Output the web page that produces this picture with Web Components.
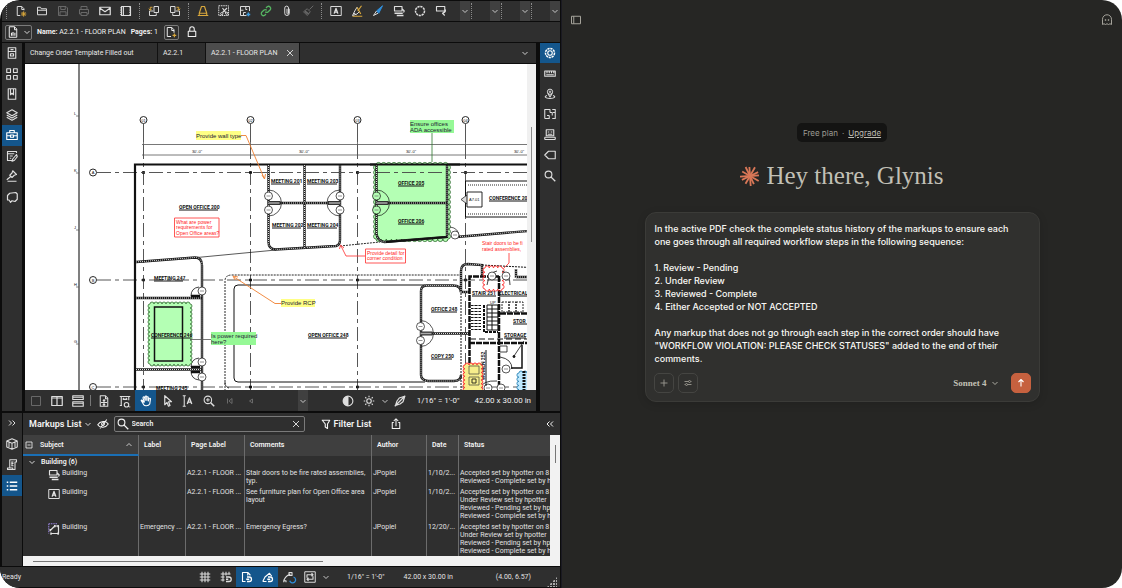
<!DOCTYPE html>
<html lang="en">
<head>
<meta charset="utf-8">
<meta name="viewport" content="width=device-width, initial-scale=1">
<title>Markup review workspace</title>
<style>
html, body { margin: 0; height: 100%; background: #fff; }
body { font-family: Roboto, "Liberation Sans", sans-serif; }
</style>
</head>
<body>
<work-space></work-space>
<script>
/* ---------- icons: 16 x 16 grid, stroked with the current colour ---------- */
const ICONS = {
  newdoc: '<path d="M7 14H3V2h6l3 3v2M9 2v4h3"/><path stroke="#d9a83c" d="M11.500 8.500v7M8 12h7M9 9.500l5 5M14 9.500l-5 5"/>',
  folder: '<path d="M2 13V3h4l1 2h7v8zM2 7h12"/>',
  save: '<path d="M2 2h10l2 2v10H2zM5 2v4h6V2M4 14V9h8v5"/>',
  print: '<path d="M4 6V2h8v4M4 12H2V6h12v6h-2M4 10h8v4H4z"/>',
  mail: '<path stroke-width="1.600" d="M1 3h14v10H1zM1 4l7 5 7-5"/>',
  panel: '<path stroke-width="1.500" d="M2 2h12v12H2zM4.500 2v12"/><path stroke-width="1.300" stroke-dasharray="1.500 1.500" d="M1 3v11M13 3v10"/>',
  rotl: '<path d="M8 2h6v8H8z"/><path d="M7 8H2v6h9v-3"/><path stroke="#d9a83c" d="M6 3H3v4M1 5l2 2 2-2"/>',
  rotr: '<path d="M8 2H2v8h6z"/><path d="M9 8h5v6H5v-3"/><path stroke="#d9a83c" d="M10 3h3v4M11 5l2 2 2-2"/>',
  stamp: '<path stroke="#d9a83c" stroke-width="1.500" d="M6 2h4l3 9v3H3v-3zM1 14h14M3 11h10"/>',
  snap: '<path stroke-dasharray="2 1" d="M1 1h13v13H1z"/><path stroke-width="1.500" d="M6 4l5 7M12 4L6 10"/><circle cx="5" cy="11.500" r="1.500"/><circle cx="11.500" cy="11" r="1.500"/>',
  planadd: '<path d="M10 14H2V2h12v6M2 7h4M9 2v4h2M6 14v-4h3"/><path stroke="#3a9be0" stroke-width="2" d="M12.500 10v5M10 12.500h5"/>',
  link: '<path stroke="#55b461" stroke-width="1.700" d="M7 9a3 3 0 0 0 4 0l3-3a3 3 0 0 0-4-4L8 4M9 7a3 3 0 0 0-4 0l-3 3a3 3 0 0 0 4 4l2-2"/>',
  clip: '<path d="M11 5v6a3 3 0 0 1-6 0V4a2 2 0 0 1 5 0v7a1 1 0 0 1-2 0V5"/>',
  brush: '<path d="M15 1l-5 5M7 5l4 4-4 5-5-5zM4 9l3 3"/><path stroke-width="2" d="M4 8l5 4"/>',
  textbox: '<path d="M1 2h14v12H1z"/><path stroke-width="1.800" d="M5.500 11.500L8 4.500l2.500 7M6 9.500h4"/>',
  hilite: '<path stroke="#d9a83c" stroke-width="1.600" d="M8 3l5 9M14 1L9 8M2 15h13"/><path d="M8 3L5 8l-3 6 6-2 3-3M4 11l3 2"/>',
  pen: '<path stroke="#2f8fdc" fill="#2f8fdc" d="M14 1L6 8l3 3z"/><path d="M6 8l-4 6 6-3"/>',
  cloudtext: '<path stroke-width="1.500" d="M2 2h10v6H2zM12 5l3 3-1 2"/><path stroke-width="1.800" d="M2 11h11M5 14h9"/>',
  cloud: '<circle cx="8" cy="8" r="6" stroke-width="2" stroke-dasharray="3 1"/>',
  callout: '<path stroke-width="1.500" d="M2 2h11v6H2zM13 5c2 3 1 5-3 6l3-2M10 11l3 3"/>',
  down: '<path stroke-width="1.700" d="M3 6l5 5 5-5"/>',
  up: '<path stroke-width="1.500" d="M3 10l5-5 5 5"/>',
  docbars: '<path d="M3 1h7l3 3v11H3zM10 1v4h3"/><path stroke-width="1.500" d="M6 13V9M8 13V8M10.500 13V9"/>',
  pageadd: '<path d="M8 14H3V2h6l3 3v4M9 2v4h3"/><path stroke="#d9a83c" stroke-width="1.500" d="M12.500 10v5M10 12.500h5"/>',
  lock: '<path stroke-width="1.400" d="M3 7h10v7H3zM5 7V4a3 3 0 0 1 6 0v3"/>',
  close: '<path stroke-width="1.700" d="M2 2l12 12M14 2L2 14"/>',
  cabinet: '<path stroke-width="1.500" d="M3 1h10v14H3zM3 6h10M6 3.500h4M6 9h4v3H6z"/>',
  grid4: '<path stroke-width="1.500" d="M1 1h5v5H1zM10 1h5v5h-5zM1 10h5v5H1zM10 10h5v5h-5z"/>',
  bookmark: '<path stroke-width="1.500" d="M3 1h10v14H3zM6 1v8l2-2 2 2V1"/>',
  layers: '<path stroke-width="1.500" d="M8 1l7 4-7 4-7-4zM1 8l7 4 7-4M1 11l7 4 7-4"/>',
  toolbox: '<path stroke-width="1.500" d="M1 5h14v9H1zM5 5V2h6v3M1 9h5M10 9h5M6 8h4v3H6z"/>',
  note: '<path stroke-width="1.500" d="M10 14H2V2h12v2M2 5h9M5 8h4M5 11h2M14 6l-5 6-1 3 3-1 4-5z"/>',
  pin: '<path stroke-width="1.500" d="M9 1l5 5-3 1-3 3-3-3 3-3zM6 9l-5 4M2 15h12"/>',
  shape: '<path stroke-width="1.600" d="M5 3l8-1 2 2v7l-3 3-4-1-2 2-2-3H2V6z"/>',
  gear: '<circle cx="8" cy="8" r="6" stroke-width="2" stroke-dasharray="3 1"/><circle cx="8" cy="8" r="3" stroke-width="1.500"/>',
  ruler: '<path stroke-width="1.500" d="M1 4h14v7H1zM4 4v3M7 4v3M10 4v3M13 4v3M3 9h10"/>',
  place: '<circle cx="8" cy="5" r="3.500"/><circle cx="8" cy="5" r="1"/><path stroke-width="1.400" d="M5 7l3 5 3-5M4 10c-4 1-3 4 4 4s8-3 4-4"/>',
  plan: '<path stroke-width="1.400" d="M1 14V2h7v4M11 2h4v12h-4M1 14h6v-4M4 10h3M8 6h3v4M12 6h3"/>',
  book: '<path stroke-width="1.500" d="M3 1h10v8H3zM5 4h2M9 4h2M5 7h6M1 11h14M1 14h14M1 11v3M15 11v3"/>',
  tag: '<path stroke-width="1.500" d="M6 3h9v10H6L1 8z"/>',
  search: '<circle cx="6" cy="6" r="4.500" stroke-width="1.500"/><path stroke-width="1.800" d="M9.500 9.500L15 15"/>',
  square: '<path d="M2 2h12v12H2z"/>',
  cols: '<path stroke-width="1.600" d="M1 2h14v12H1zM8 2v12M1 4h14"/>',
  rows: '<path stroke-width="1.500" d="M1 1h14v5H1zM1 3h14M1 9h14v6H1zM1 11h14"/>',
  fitpage: '<path stroke-width="1.400" d="M3 1h7l3 3v11H3zM10 1v4h3M8 6v8M4 10h8M6.500 8L8 6l1.500 2M6.500 12L8 14l1.500-2"/>',
  fitwidth: '<path stroke-width="1.500" d="M1 2h14M3 2v12M1 14h3M13 2v5M7 13a3 3 0 1 0 6 0 3 3 0 0 0-6 0M5 6h6M5 6l2-2M11 6L9 4M12 15l3 1"/>',
  hand: '<path stroke-width="1.500" d="M5 10L3 7c-1-1-2 0-1 1l3 5c1 2 6 2 8-1l1-7c0-1-2-1-2 0l-1 3V3c0-1-2-1-2 0v4V2c0-1-2-1-2 0v5L6 3C5 2 4 3 4 4l2 6"/>',
  arrow: '<path stroke-width="1.600" d="M5 1v12l3-3 2 5 2-1-2-5h4z"/>',
  textsel: '<path stroke-width="1.400" d="M1 1h4M3 1v14M1 15h4"/><path stroke-width="1.800" d="M7 12l3-8 3 8M8 9.500h4"/>',
  zoomin: '<circle cx="6.500" cy="6.500" r="5" stroke-width="1.400"/><path stroke-width="2" d="M10 10l5 5"/><path d="M6.500 4v5M4 6.500h5"/>',
  first: '<path stroke-width="2" d="M3 3v10M12 3L6 8l6 5z"/>',
  prev: '<path stroke-width="2" d="M11 4L5 8l6 4z"/>',
  contrast: '<circle cx="8" cy="8" r="6.500" stroke-width="1.500"/><path fill="currentColor" d="M8 2v12a6 6 0 0 1 0-12z"/>',
  sun: '<circle cx="8" cy="8" r="3" stroke-width="1.500"/><path stroke-width="1.500" d="M8 1v2M8 13v2M1 8h2M13 8h2M3 3l1.500 1.500M11.500 11.500L13 13M3 13l1.500-1.500M11.500 4.500L13 3"/>',
  nib: '<path stroke-width="1.600" d="M13 2L7 4 4 8l-2 6 6-2 4-3 2-6zM1 15L15 1"/>',
  chevrons: '<path stroke-width="2" d="M2 3l5 5-5 5M9 3l5 5-5 5"/>',
  chevronsl: '<path stroke-width="2" d="M7 3L2 8l5 5M14 3L9 8l5 5"/>',
  cube: '<path stroke-width="1.400" d="M8 1l7 3v8l-7 3-7-3V4zM1 4l7 3 7-3M8 7v8M4 6v6M12 6v6"/>',
  script: '<path stroke-width="1.400" d="M5 12V1h9v3h-2v10H2v-2h7v2M7 4h3M7 6h3M7 9h3M8 4v5"/>',
  list: '<path stroke-width="2" d="M5 3h10M5 8h10M5 13h10M1 3h2M1 8h2M1 13h2"/>',
  eyeoff: '<path stroke-width="1.400" d="M1 9c3-5 11-6 14-1-3 5-11 6-14 1zM13 2L4 14"/><circle cx="8" cy="8" r="2"/>',
  filter: '<path stroke-width="1.500" d="M3 3h10l-3 5v6l-3-2V8z"/>',
  share: '<path stroke-width="1.400" d="M5 6H3v8h10V6h-2M8 11V1M5 4l3-3 3 3"/>',
  minusbox: '<path stroke-width="1.600" d="M2 2h12v12H2zM5 8h6"/>',
  polyline: '<path stroke="#9a86e0" stroke-dasharray="2 1" d="M1 1h12M1 1v13"/><path stroke-width="1.600" d="M3 10l6-6h5v10H4"/><path stroke-width="3" d="M2 9.500h2M12.500 4h2M3 14h2M12.500 14h2M8 4h2"/>',
  hash: '<path stroke-width="1.400" d="M4 1v14M8 1v14M12 1v14M1 4h14M1 8h14M1 12h14"/>',
  hashsnap: '<path stroke-width="1.400" d="M4 1v13M8 1v5M12 1v4M1 4h13M1 8h5M1 12h5"/><path stroke-width="1.700" d="M8 8h4a3 3 0 0 1 0 6H8M8 11h3"/>',
  docsnap: '<path stroke-width="1.500" d="M6 14H2V2h7l3 3v1M9 2v4"/><path stroke-width="1.700" d="M8 8h3a3 3 0 0 1 0 6H8M7 11h4"/>',
  pensnap: '<path stroke-width="1.500" d="M1 14l3-6 6-5 3 4M1 14h5"/><path stroke-width="1.700" d="M8 8h3a3 3 0 0 1 0 6H8M7 11h4"/>',
  curvesnap: '<path stroke-width="1.500" d="M1 15c0-5 4-9 9-11M8 2h4v4H8zM1 13h3v2"/><path stroke="#2f8fdc" stroke-width="1.700" d="M14 8a4 4 0 1 1-5 5"/>',
  swap: '<path stroke-width="1.300" d="M1 1h14v14H1z"/><path stroke-width="1.500" d="M4 9V5h8M10 3l2 2-2 2M12 7v4H4M6 9l-2 2 2 2"/>',
  sidebar: '<path d="M2 3h12v10H2zM5 3v10"/>',
  ghost: '<path d="M2 14V7a6 6 0 0 1 12 0v7l-2-1-2 1-2-1-2 1-2-1z"/><path stroke-width="1.800" d="M6 7v2M10 7v2"/>',
  plus: '<path stroke-width="1.800" d="M8 1v14M1 8h14"/>',
  sliders: '<path stroke-width="1.800" d="M1 5h8M14 5h1M1 11h1M7 11h8"/><circle stroke-width="1.800" cx="11" cy="5" r="2"/><circle stroke-width="1.800" cx="5" cy="11" r="2"/>',
  send: '<path stroke-width="2.200" d="M8 15V1M3 6l5-5 5 5"/>'
};

function define(name, html, after) {
  const t = document.createElement('template');
  t.innerHTML = '<style>*{box-sizing:border-box}button,input,textarea{font:inherit;color:inherit;margin:0}</style>' + html;
  customElements.define(name, class extends HTMLElement {
    constructor() {
      super();
      this.attachShadow({ mode: 'open' }).append(t.content.cloneNode(true));
    }
    connectedCallback() { if (after) after(this, this.shadowRoot); }
  });
}

define('app-icon',
  `<style>:host{display:block;width:12px;height:12px;flex:none}
  :host([small]){width:8px;height:8px}
  svg{display:block;width:100%;height:100%;overflow:visible}</style>
  <svg viewBox="0 0 16 16" fill="none" stroke="currentColor" stroke-width="1.300" stroke-linejoin="round" aria-hidden="true"></svg>`,
  (el, root) => { root.querySelector('svg').innerHTML = ICONS[el.getAttribute('name')] || ''; });

define('tool-button',
  `<style>:host{display:flex;width:21px;flex:none;color:#dedede}
  :host([rail]){width:100%;flex:1}
  :host([dim]){color:#6a6a6a}
  :host([on]){background:#14568c;color:#fff}
  button{flex:1;border:0;padding:0;background:none;display:flex;align-items:center;justify-content:center}
  :host([combo]){width:10px;background:#404040}</style>
  <button type="button"><app-icon></app-icon></button>`,
  (el, root) => {
    const icon = el.getAttribute('icon'), i = root.querySelector('app-icon');
    if (el.hasAttribute('small') || icon === 'down') i.setAttribute('small', '');
    const fresh = i.cloneNode();
    fresh.setAttribute('name', icon);
    i.replaceWith(fresh);
    root.querySelector('button').setAttribute('aria-label', el.getAttribute('label') || icon);
  });

define('tool-grip',
  `<style>:host{display:flex;width:7px;flex:none;justify-content:center;padding:2px 0}
  i{border-left:1px dotted #8a8a8a}</style><i></i>`);

define('main-toolbar',
  `<style>:host{display:flex;height:20px;background:#2f2f2f;padding-left:1px}
  .more{flex:1;display:flex;justify-content:flex-end}
  .more span{display:flex;width:20px;padding:2px 0}
  .more i{border-left:1px dotted #8a8a8a;margin-left:1px}</style>
  <tool-grip></tool-grip>
  <tool-button icon="newdoc"></tool-button><tool-button icon="folder"></tool-button><tool-button dim icon="save"></tool-button><tool-button dim icon="print"></tool-button><tool-button icon="mail"></tool-button><tool-button icon="panel"></tool-button>
  <tool-grip></tool-grip>
  <tool-button icon="rotl"></tool-button><tool-button icon="rotr"></tool-button>
  <tool-grip></tool-grip>
  <tool-button icon="stamp"></tool-button><tool-button icon="snap"></tool-button><tool-button icon="planadd"></tool-button><tool-button icon="link"></tool-button><tool-button icon="clip"></tool-button><tool-button dim icon="brush"></tool-button>
  <tool-grip></tool-grip>
  <tool-button icon="textbox"></tool-button><tool-button icon="hilite"></tool-button><tool-button icon="pen"></tool-button><tool-button icon="cloudtext"></tool-button><tool-button icon="cloud"></tool-button><tool-button icon="callout"></tool-button>
  <div class="more"><tool-button combo icon="down"></tool-button><span><i></i></span><tool-button combo icon="down"></tool-button><span><i></i></span><tool-button combo icon="down"></tool-button><span><i></i></span><tool-button combo icon="down"></tool-button></div>`);

define('page-bar',
  `<style>:host{display:flex;height:20px;background:#2f2f2f;align-items:center;padding-left:3px;color:#f2f2f2;font-size:7px}
  button{display:flex;align-items:center;justify-content:center;gap:4px;height:15px;background:none;border:1px solid #7a7a7a;border-radius:2px;padding:0}
  .kind{width:27px}.add{width:15px;margin:0 7px 0 6px}
  .lock{border:0}
  p{margin:0 0 0 5px}b{font-weight:700}</style>
  <button class="kind" type="button" aria-label="Page kind"><app-icon name="docbars"></app-icon><app-icon small name="down"></app-icon></button>
  <p><b>Name:</b> A2.2.1 - FLOOR PLAN</p><p><b>Pages:</b> 1</p>
  <button class="add" type="button" aria-label="Add page"><app-icon name="pageadd"></app-icon></button>
  <button class="lock" type="button" aria-label="Lock"><app-icon name="lock"></app-icon></button>`);

define('tab-strip',
  `<style>:host{display:flex;height:20px;background:#2f2f2f;color:#e8e8e8;font-size:7px;margin-bottom:1px}
  button{border:0;border-right:1px solid #111;background:none;padding:0 5px;text-align:left;display:flex;align-items:center;justify-content:space-between;flex:none}
  .a{width:133px}.b{width:48px}.c{width:94px;background:#4c4c4c}
  .end{flex:1;border:0;justify-content:flex-end;padding-right:7px}</style>
  <button class="a" type="button">Change Order Template Filled out</button><button class="b" type="button">A2.2.1</button><button class="c" type="button">A2.2.1 - FLOOR PLAN <app-icon small name="close"></app-icon></button><button class="end" type="button" aria-label="All tabs"><app-icon small name="down"></app-icon></button>`);

define('side-rail',
  `<style>:host{display:block;background:#2f2f2f;width:20px;flex:none}
  div{display:flex;flex-direction:column}</style><div><slot></slot></div>`,
  (el, root) => { root.querySelector('div').style.height = el.getAttribute('length') + 'px'; });

/* ---------- floor plan ---------- */
function cloudPath(x, y, w, h, size) {
  const nx = Math.round(w / size), ny = Math.round(h / size), sx = w / nx, sy = h / ny;
  let d = `M${x} ${y}`;
  for (let i = 0; i < nx; i++) d += `a${sx / 2} ${sx / 2} 0 0 1 ${sx} 0`;
  for (let i = 0; i < ny; i++) d += `a${sy / 2} ${sy / 2} 0 0 1 0 ${sy}`;
  for (let i = 0; i < nx; i++) d += `a${sx / 2} ${sx / 2} 0 0 1 ${-sx} 0`;
  for (let i = 0; i < ny; i++) d += `a${sy / 2} ${sy / 2} 0 0 1 0 ${-sy}`;
  return d + 'z';
}
const room = (x, y, s, w) => `<text class="room" x="${x}" y="${y}">${s}</text><path stroke-width="1" d="M${x} ${y + 1}h${w}"/>`;
const wall = d => `<path class="wall" d="${d}"/><path class="core" d="${d}"/>`;
const tag = (x, y) => `<circle cx="${x}" cy="${y}" r="4" fill="#fff" stroke-width=".7"/><path stroke-width=".8" stroke="#777" d="M${x - 2} ${y}h4"/>`;
const door = (x, y, dir) => `<path fill="none" stroke-width=".7" d="M${x} ${y - 13}a13 13 0 0 ${dir > 0 ? 1 : 0} 0 26"/><path stroke="#333" stroke-width="4" d="M${x} ${y}h${12 * dir}"/><path stroke="#aaa" stroke-width="1.500" d="M${x} ${y}h${11 * dir}"/>${tag(x, y - 7)}${tag(x, y + 7)}`;

function planMarkup() {
  let s = '';
  s += '<path stroke="#555" stroke-width="1.500" d="M79 64v340"/>';
  [[115, 'L'], [172, 'K'], [229, 'J'], [286, 'H'], [343, 'G']].forEach(([y, t]) => {
    s += `<path stroke-width=".7" stroke="#555" d="M76 ${y + 1}h3"/><text class="tiny" x="74" y="${y}">${t}</text>`;
  });
  [143, 250, 357, 465].forEach((x, i) => {
    s += `<circle cx="${x + .5}" cy="120" r="3.500" fill="none" stroke-width=".9"/><text class="tiny" text-anchor="middle" x="${x + .5}" y="121.500">0${i + 1}</text>
    <path stroke="#444" stroke-width=".9" d="M${x + .5} 124v18"/><path class="axis" d="M${x + .5} 145V400"/><path stroke-width="2.500" d="M${x - 1} 172.500h3M${x - 1} 280h3M${x - 1} 387h3"/>`;
    s += `<text class="tiny" text-anchor="middle" x="${x + 54}" y="153">30'-0"</text>`;
  });
  [172.5, 280, 387].forEach((y, i) => {
    s += `<circle cx="93" cy="${y}" r="3.500" fill="none" stroke-width=".9"/><text class="tiny" text-anchor="middle" x="93" y="${y + 1.5}">${'ABC'[i]}</text><path class="axis" d="M97 ${y}H540"/>`;
  });
  s += '<path stroke="#555" stroke-width=".8" d="M142 144.500H540M142 155H540M143.500 142v15M250.500 142v15M357.500 142v15M465.500 142v15"/>';
  s += '<path stroke-width="2.200" fill="none" d="M135 400V164.500H540"/>';
  /* meeting rooms 201 - 204 */
  s += wall('M268.500 165V242q0 7 7 7.500L336 246q4-1 4-6V165') + wall('M304.500 165V248') + wall('M269 203H340');
  s += door(268.5, 203, 1) + door(340, 203, -1);
  s += room(271, 183, 'MEETING 201', 29) + room(307, 183, 'MEETING 203', 30) + room(272, 227, 'MEETING 202', 29) + room(307, 227, 'MEETING 204', 30);
  s += room(179, 209, 'OPEN OFFICE 200', 39);
  s += '<path fill="none" stroke-width=".7" d="M197 257.500L276 250"/><path fill="none" stroke-width=".9" stroke-dasharray="2 1" d="M340 246L380 242"/>' + wall('M456 237L540 230');
  /* offices 205 / 206 */
  s += `<path d="${cloudPath(376, 165, 72, 74, 5)}" fill="#b4ffb4" stroke="#2d6a2d" stroke-width=".8"/>`;
  s += '<path class="axis" d="M376 172.500h72"/>';
  s += wall('M376.500 165V234q1 7 8 8L447 237V165') + wall('M377 203H447');
  s += '<path stroke-width="2" d="M386 242l61-5"/><path stroke-width="2.200" d="M370 164.500h90"/>';
  s += door(376.5, 203, 1).replaceAll('fill="#fff"', 'fill="#b4ffb4"');
  s += room(398, 185, 'OFFICE 205', 26) + room(398, 223, 'OFFICE 206', 26);
  s += '<path fill="none" stroke-width=".7" d="M450 227q9 1 9 10"/>' + tag(455, 235);
  /* conference room on the right */
  s += '<path fill="none" stroke-width="1" d="M540 181H465.500V217H540"/><path fill="none" stroke-width=".9" stroke-dasharray="1 1" d="M468 185H540M468 214H540"/><path fill="#ddd" stroke-width=".7" d="M467 195l-6 4.500 6 4.500"/><path fill="#fff" stroke-width=".9" d="M467 192h15v15h-15z"/><text class="tiny" x="469" y="201">A7.01</text>';
  s += room(489, 200, 'CONFERENCE 20', 42);
  /* west rooms */
  s += wall('M136 262L195 257.500q7 0 7 8V400') + wall('M136 298H202') + wall('M136 369.500H202');
  s += '<path fill="none" stroke-width=".8" d="M191 296q0-8 8-9M191 367q0-8 8-9M191 371q0 8 8 9"/><path stroke-width="2.500" d="M191 296h9M191 367h9M191 372h9"/>' + tag(202, 291) + tag(202, 362) + tag(202, 377);
  s += room(154, 280, 'MEETING 247', 29) + room(156, 390, 'MEETING 245', 29);
  s += `<path d="${cloudPath(150, 304, 40, 60, 4)}" fill="#b4ffb4" stroke="#2d6a2d" stroke-width=".8"/>`;
  s += '<path fill="none" stroke-width="1.500" d="M154.500 307h28v54h-28z"/>' + room(151, 337, 'CONFERENCE 246', 40);
  s += '<path stroke="#555" stroke-width=".8" d="M190 339.500H211"/>';
  /* open office */
  s += '<path fill="none" stroke-width=".9" stroke-dasharray="2 1" d="M225 400V281q0-6 7-6H461M225 382q0 5 4 6"/><path fill="none" stroke-width="1" d="M425 285H238q-4 0-4 4V378q0 4 4 4H425"/>';
  s += room(308, 337, 'OPEN OFFICE 248', 39);
  s += wall('M421 291q0-5 5-5.500H453q8 0 8 7M461 375q0 6-7 6H428q-7-1-7-6V291') + wall('M421 333.500H469') + '<path fill="none" stroke-dasharray="2 1" d="M461 290V400"/>';
  s += door(420.5, 333.5, 1) + room(431, 311, 'OFFICE 248', 26) + room(431, 358, 'COPY 250', 21);
  /* stair core */
  s += wall('M461 292V271q0-7 7-7L482 265V276') + wall('M461 292H470') + '<path fill="none" stroke-dasharray="2 1" d="M482 265L540 268"/>' + wall('M516 278V269M516 277H540');
  s += '<path fill="none" stroke-width="2.500" stroke-dasharray="6 1" d="M469.500 343V276.500H499M469 343H540M499 276V400M469.500 343V400"/><path stroke-width="1.200" stroke-dasharray="6 3" d="M470 339H540"/>';
  s += '<path stroke-width="10" stroke-dasharray="1 2" d="M476 305V331"/><path stroke="#fff" stroke-width=".8" d="M474 304v28M478 304v28"/><path fill="none" stroke-width="1" d="M487 305h11v25h-11zM487 309h11M487 313h11M487 317h11M487 321h11M487 325h11M492 305v25"/><path fill="none" stroke-width="2" stroke-dasharray="3 1" d="M484 305v27h14"/>';
  s += room(472, 295, 'STAIR 251', 24) + room(499, 295, 'ELECTRICAL', 28) + '<text class="tiny" x="490" y="304">UP</text>';
  s += '<path fill="none" stroke-width=".9" stroke-dasharray="2 1" d="M502 302h7v10h-7zM509 302h7v10h-7zM516 302h7v10h-7z"/><path stroke-width="2.500" stroke-dasharray="6 1" d="M500 313.500H540"/>';
  s += room(513, 323, 'STOR', 22) + room(504, 337, 'STORAGE', 22);
  s += '<path fill="none" stroke-width=".8" d="M500 346h7v6h-7M524 341L514 356"/><circle cx="514" cy="356.500" r="1" fill="#111"/><path fill="none" stroke-width="1.500" d="M522 345v23h-11"/>' + tag(506, 369) + tag(488, 388) + tag(501, 388);
  s += '<path fill="none" stroke-width=".8" d="M500 357q12 2 12 12M479 389q4-9 18-8"/><text class="room" transform="translate(485 380) rotate(-90)">WOMEN 252</text><path stroke-width="1" d="M486 350v36"/>';
  s += `<path d="${cloudPath(485, 268, 17, 21, 4)}" fill="none" stroke="#f33" stroke-width=".9"/>` + '<path fill="none" stroke-width=".8" d="M487 285q2-13 10-14M510 285q0-12-8-14"/>' + tag(492, 276) + tag(506, 276);
  s += `<path d="${cloudPath(465, 365, 16, 30, 4)}" fill="#f6ee8c" stroke="#f33" stroke-width="1"/><path fill="none" stroke="#554" d="M469 366h10v8h-10zM469 377h10v8h-10z" stroke-width=".8"/><path fill="none" stroke="#332" d="M472 379h4v4h-4z"/>`;
  s += `<path d="${cloudPath(519, 373, 16, 25, 4)}" fill="#bfe9ff" stroke="#2d86b8" stroke-width=".9"/><path stroke-width="3" stroke-dasharray="2 1" d="M524 371v20"/>`;
  /* review markups */
  s += '<path fill="#ffff85" stroke="none" d="M196 131h45v9h-45zM281 299h34v8h-34z"/><path fill="none" stroke="#f08030" stroke-width=".9" d="M241 135.500h5L264 178M262 175l2.500 4 1-5M281 303.500h-6L234 277M238 277l-5-1 2 4"/>';
  s += '<text class="note" x="196" y="137.500">Provide wall type</text><text class="note" x="281" y="305">Provide RCP</text>';
  s += '<path fill="#96f996" stroke="none" d="M410 120h44v13h-44zM211 332h45v13h-45z"/><path stroke="#2d7a2d" stroke-width=".8" d="M432 133v29"/>';
  s += '<text class="note" x="410" y="126">Ensure offices</text><text class="note" x="410" y="132">ADA accessible</text><text class="note" x="211" y="338">Is power required</text><text class="note" x="211" y="344">here?</text>';
  s += '<path fill="#fff" stroke="#f44" stroke-width=".9" d="M174.500 218h44.500v19h-44.500zM365.500 249h40v14h-40z"/><path fill="none" stroke="#f44" stroke-width=".9" d="M365 256h-19L341 246M339.500 249l1-4 3.500 3M509 253v10l-5 5"/>';
  s += '<text class="red" x="176" y="224">What are power</text><text class="red" x="176" y="229">requirements for</text><text class="red" x="176" y="235">Open Office areas?</text><text class="red" x="367" y="255">Provide detail for</text><text class="red" x="367" y="260">corner condition</text><text class="red" x="482" y="245">Stair doors to be fi</text><text class="red" x="482" y="251">rated assemblies,</text>';
  return s;
}

define('floor-plan',
  `<style>:host{display:flex;flex:1;min-height:0;background:#fff;overflow:hidden}
  .sheet{flex:1;min-width:0;position:relative;overflow:hidden}
  svg{position:absolute;inset:0;width:100%;height:100%;stroke:#111;fill:#111}
  text{stroke:none;font-family:"Liberation Sans",sans-serif}
  .room{font:bold 5px Roboto,sans-serif}
  .tiny{font-size:4px}.note{font-size:6px;fill:#223}.red{font-size:5px;fill:#f22}
  .wall{fill:none;stroke:#1a1a1a;stroke-width:2.400}.core{fill:none;stroke:#ddd;stroke-width:1;stroke-dasharray:1 1}
  .axis{fill:none;stroke:#444;stroke-width:.9;stroke-dasharray:14 4 4 4}
  .bar{width:9px;background:#f0f0f0;display:flex;justify-content:center;padding-top:63px}
  .bar i{width:1px;height:115px;background:#888}</style>
  <div class="sheet"><svg viewBox="25 64 502 326" preserveAspectRatio="xMinYMin slice" role="img" aria-label="Floor plan"></svg></div><div class="bar"><i></i></div>`,
  (el, root) => { root.querySelector('svg').innerHTML = planMarkup(); });

define('view-toolbar',
  `<style>:host{display:flex;height:21px;background:#2f2f2f;color:#eee;font-size:8px;align-items:stretch}
  .line{width:1px;background:#777;margin:5px 2px}
  .grow{flex:1}
  span{align-self:center;white-space:nowrap}
  .scale{margin:0 15px 0 6px}.size{margin-right:5px}
  .mid{margin-right:30px}.narrow{width:10px}</style>
  <tool-button dim icon="square"></tool-button><tool-button icon="cols"></tool-button><tool-button icon="rows"></tool-button><i class="line"></i><tool-button icon="fitpage"></tool-button><tool-button icon="fitwidth"></tool-button><tool-button on icon="hand"></tool-button><tool-button icon="arrow"></tool-button><tool-button icon="textsel"></tool-button><tool-button icon="zoomin"></tool-button><tool-button dim small icon="first"></tool-button><tool-button dim small icon="prev"></tool-button>
  <div class="grow"></div><tool-button class="mid" combo icon="down"></tool-button>
  <tool-button icon="contrast"></tool-button><tool-button icon="sun"></tool-button><tool-button class="narrow" icon="down"></tool-button><tool-button icon="nib"></tool-button>
  <span class="scale">1/16" = 1'-0"</span><span class="size">42.00 x 30.00 in</span>`);

/* ---------- markups list ---------- */
define('markups-header',
  `<style>:host{display:flex;height:22px;background:#2f2f2f;color:#f4f4f4;align-items:center;padding:0 6px}
  button{border:0;background:none;padding:0;display:flex;align-items:center;gap:2px;font-size:9px;font-weight:600;white-space:nowrap}
  .title{margin-right:5px}
  label{display:flex;align-items:center;gap:3px;width:191px;height:16px;border:1px solid #7a7a7a;border-radius:2px;margin:0 15px 0 5px;padding:0 4px 0 2px}
  input{flex:1;min-width:0;border:0;background:none;padding:0;outline:0;font-size:7px;font-weight:600}
  input::placeholder{color:#f0f0f0;opacity:1}
  .share{margin-left:19px}.end{margin-left:auto}</style>
  <button class="title" type="button">Markups List <app-icon small name="down"></app-icon></button>
  <button type="button" aria-label="Hide markups"><app-icon name="eyeoff"></app-icon></button>
  <label aria-label="Search"><app-icon name="search"></app-icon><input type="text" placeholder="Search"><app-icon small name="close"></app-icon></label>
  <button type="button"><app-icon name="filter"></app-icon>Filter List</button>
  <button class="share" type="button" aria-label="Share"><app-icon name="share"></app-icon></button>
  <button class="end" type="button" aria-label="Collapse"><app-icon small name="chevronsl"></app-icon></button>`);

define('markups-table',
  `<style>:host{display:flex;background:#2f2f2f;color:#e2e2e2;font-size:7px;line-height:8px}
  .main{flex:1;min-width:0}
  table{width:100%;table-layout:fixed;border-collapse:separate;border-spacing:0}
  th,td{padding:2px 0 1px 1px;text-align:left;vertical-align:top;border-right:1px solid #6c6c6c;overflow:hidden;white-space:nowrap}
  th:last-child,td:last-child{border-right:0}
  thead th{height:21px;background:#3f3f3f;color:#f4f4f4;font-weight:600;vertical-align:middle;padding:0 0 2px 5px}
  thead th:first-child{border-bottom:2px solid #1a6fb5;padding:0 5px 0 2px}
  .subj{display:flex;align-items:center;gap:7px}.subj app-icon:last-child{margin-left:auto}
  .group th{height:11px;padding:0 0 0 5px;color:#f4f4f4;font-weight:600}
  .group td{padding:0}
  .group div{display:flex;gap:5px;align-items:center;height:11px}
  .item{display:flex;gap:2px;padding-left:24px;height:8px}
  .wrap{white-space:normal}
  .h{height:10px;background:#f2f2f2;display:flex;align-items:center;padding-left:10px}
  .h i{height:1px;width:290px;background:#777}
  .v{width:10px;background:#f2f2f2;display:flex;justify-content:center;padding-top:10px}
  .v i{width:1px;height:18px;background:#777}</style>
  <div class="main"><table>
  <colgroup><col style="width:116px"><col style="width:47px"><col style="width:59px"><col style="width:127px"><col style="width:55px"><col style="width:32px"><col></colgroup>
  <thead><tr><th><div class="subj"><app-icon small name="minusbox"></app-icon>Subject<app-icon small name="up"></app-icon></div></th><th>Label</th><th>Page Label</th><th>Comments</th><th>Author</th><th>Date</th><th>Status</th></tr></thead>
  <tbody>
  <tr class="group"><th><div><app-icon small name="down"></app-icon>Building (6)</div></th><td></td><td></td><td></td><td></td><td></td><td></td></tr>
  <tr><td><div class="item"><app-icon name="cloudtext"></app-icon>Building</div></td><td></td><td>A2.2.1 - FLOOR ...</td><td class="wrap">Stair doors to be fire rated assemblies, typ.</td><td>JPopiel</td><td>1/10/2...</td><td>Accepted set by hpotter on 8<br>Reviewed - Complete set by h</td></tr>
  <tr><td><div class="item"><app-icon name="textbox"></app-icon>Building</div></td><td></td><td>A2.2.1 - FLOOR ...</td><td class="wrap">See furniture plan for Open Office area layout</td><td>JPopiel</td><td>1/10/2...</td><td>Accepted set by hpotter on 8<br>Under Review set by hpotter<br>Reviewed - Pending set by hp<br>Reviewed - Complete set by h</td></tr>
  <tr><td><div class="item"><app-icon name="polyline"></app-icon>Building</div></td><td>Emergency ...</td><td>A2.2.1 - FLOOR ...</td><td class="wrap">Emergency Egress?</td><td>JPopiel</td><td>12/20/...</td><td>Accepted set by hpotter on 8<br>Under Review set by hpotter<br>Reviewed - Pending set by hp<br>Reviewed - Complete set by h</td></tr>
  </tbody></table><div class="h"><i></i></div></div><div class="v"><i></i></div>`);

define('status-bar',
  `<style>:host{display:flex;height:20px;background:#2f2f2f;color:#e2e2e2;font-size:7px;align-items:stretch;margin-left:-2px}
  span{align-self:center;white-space:nowrap}
  .ready{width:194px;padding-left:2px}.narrow{width:12px}
  .scale{margin-left:15px}.size{margin:0 auto 0 19px}.pos{margin-right:16px}
  .grip{width:10px;height:10px;align-self:flex-end;margin-right:3px;background:radial-gradient(circle at 1px 1px,#aaa 1px,transparent 1px) 0 0/3px 3px;clip-path:polygon(100% 0,100% 100%,0 100%)}</style>
  <span class="ready">Ready</span>
  <tool-button icon="hash"></tool-button><tool-button icon="hashsnap"></tool-button><tool-button on icon="docsnap"></tool-button><tool-button on icon="pensnap"></tool-button><tool-button icon="curvesnap"></tool-button><tool-button icon="swap"></tool-button><tool-button class="narrow" icon="down"></tool-button>
  <span class="scale">1/16" = 1'-0"</span><span class="size">42.00 x 30.00 in</span><span class="pos">(4.00, 6.57)</span><i class="grip"></i>`);

define('plan-editor',
  `<style>:host{display:flex;flex-direction:column;gap:1px;background:#0c0c0c;padding:1px 1px 1px 2px;min-width:0;box-sizing:border-box}
  .mid{flex:1;display:flex;min-height:0;margin-bottom:1px}
  .doc{flex:1;display:flex;flex-direction:column;min-width:0;margin:0 4px 0 3px}
  .low{display:flex;gap:1px}.low div{flex:1;min-width:0}</style>
  <main-toolbar></main-toolbar>
  <page-bar></page-bar>
  <div class="mid">
    <side-rail length="164"><tool-button rail icon="cabinet"></tool-button><tool-button rail icon="grid4"></tool-button><tool-button rail icon="bookmark"></tool-button><tool-button rail icon="layers"></tool-button><tool-button rail on icon="toolbox"></tool-button><tool-button rail icon="note"></tool-button><tool-button rail icon="pin"></tool-button><tool-button rail icon="shape"></tool-button></side-rail>
    <div class="doc"><tab-strip></tab-strip><floor-plan></floor-plan><view-toolbar></view-toolbar></div>
    <side-rail length="143"><tool-button rail on icon="gear"></tool-button><tool-button rail icon="ruler"></tool-button><tool-button rail icon="place"></tool-button><tool-button rail icon="plan"></tool-button><tool-button rail icon="book"></tool-button><tool-button rail icon="tag"></tool-button><tool-button rail icon="search"></tool-button></side-rail>
  </div>
  <div class="low">
    <side-rail length="83"><tool-button rail small icon="chevrons"></tool-button><tool-button rail icon="cube"></tool-button><tool-button rail icon="script"></tool-button><tool-button rail on icon="list"></tool-button></side-rail>
    <div><markups-header></markups-header><markups-table></markups-table></div>
  </div>
  <status-bar></status-bar>`);

/* ---------- chat ---------- */
define('burst-logo',
  `<style>:host{display:block;width:20px;height:20px;flex:none}svg{display:block}</style>
  <svg viewBox="-10 -10 20 20" stroke="#d97757" stroke-width="1.800" aria-hidden="true"></svg>`,
  (el, root) => {
    const len = [9, 10, 9, 10, 9, 9, 10, 9, 10, 9, 10, 9];
    root.querySelector('svg').innerHTML = len.map((r, i) => {
      const a = (i * 30 + (i % 3) * 4 - 4) * Math.PI / 180;
      return `<path d="M0 0L${(r * Math.cos(a)).toFixed(1)} ${(r * Math.sin(a)).toFixed(1)}"/>`;
    }).join('');
  });

define('chat-composer',
  `<style>:host{display:block;width:395px;max-width:calc(100% - 32px);box-sizing:border-box;background:#30302e;border:1px solid #3b3b38;border-radius:11px;padding:9px 8px 8px;box-shadow:0 2px 8px #0002}
  textarea{display:block;width:100%;height:143px;border:0;padding:0 12px 0 1px;outline:0;resize:none;overflow:hidden;background:none;color:#faf9f5;font:500 9px/13px Inter,sans-serif}
  .row{display:flex;align-items:center;gap:4px;margin-top:8px}
  button{border:1px solid #454542;border-radius:5px;background:none;width:20px;height:20px;padding:0;display:flex;align-items:center;justify-content:center;color:#9c9a92}
  .model{margin-left:auto;margin-right:8px;width:auto;border:0;gap:4px;color:#c2c0b6;font:bold 9px "Liberation Serif",serif}
  .send{background:#c6613f;border-color:#c6613f;color:#fff}</style>
  <textarea aria-label="Message">In the active PDF check the complete status history of the markups to ensure each one goes through all required workflow steps in the following sequence:

1. Review - Pending
2. Under Review
3. Reviewed - Complete
4. Either Accepted or NOT ACCEPTED

Any markup that does not go through each step in the correct order should have "WORKFLOW VIOLATION: PLEASE CHECK STATUSES" added to the end of their comments.</textarea>
  <div class="row"><button type="button" aria-label="Add"><app-icon small name="plus"></app-icon></button><button type="button" aria-label="Tools"><app-icon small name="sliders"></app-icon></button><button class="model" type="button">Sonnet 4 <app-icon small name="down"></app-icon></button><button class="send" type="button" aria-label="Send"><app-icon small name="send"></app-icon></button></div>`);

define('chat-pane',
  `<style>:host{display:flex;flex-direction:column;align-items:center;background:#262624;min-width:0;border-left:1px solid #1a1a22;box-sizing:border-box}
  header{align-self:stretch;display:flex;justify-content:space-between;padding:14px 9px 0 8px;color:#a9a79e;height:42px}
  header button{border:0;background:none;padding:0;height:12px}
  .plan{display:flex;gap:4px;align-items:center;margin-top:81px;height:19px;padding:0 6px;border-radius:5px;background:#141413;color:#9c9a92;font:8px Inter,sans-serif}
  a{color:#bdbbb2}
  h1{display:flex;align-items:center;gap:6px;margin:19px 0 21px;font:25px/30px "Liberation Serif",serif;color:#c2c0b6}</style>
  <header><button type="button" aria-label="Sidebar"><app-icon name="sidebar"></app-icon></button><button type="button" aria-label="Incognito"><app-icon name="ghost"></app-icon></button></header>
  <div class="plan"><span>Free plan</span><span>·</span><a href="#upgrade">Upgrade</a></div>
  <h1><burst-logo></burst-logo>Hey there, Glynis</h1>
  <chat-composer></chat-composer>`);

define('work-space',
  `<style>:host{display:grid;grid-template-columns:1fr 1fr;min-height:100vh;border-radius:20px;overflow:hidden}</style>
  <plan-editor></plan-editor><chat-pane></chat-pane>`);
</script>
</body>
</html>
